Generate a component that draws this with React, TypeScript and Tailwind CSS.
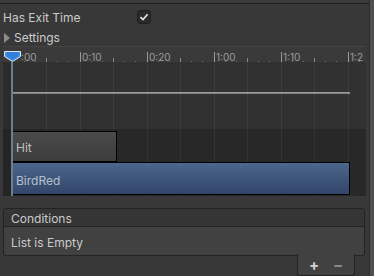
import React from 'react';

const FONT = { fontFamily: 'Inter, "Noto Sans", sans-serif' };

// timeline geometry, relative to the timeline's left edge (page x = 3)
const ORIGIN = 9.5;
const SECOND = 67;
const TIMELINE_W = 363;

const rulerLabels = [
    { k: 1, t: '0:10' },
    { k: 2, t: '0:20' },
    { k: 3, t: '1:00' },
    { k: 4, t: '1:10' },
    { k: 5, t: '1:2' },
];

const Ruler: React.FC = () => {
    const ticks = [];
    for (let i = 1; i <= 32; i++) {
        const x = Math.round(ORIGIN + (i * SECOND) / 6) + 0.5;
        if (x > TIMELINE_W - 4) break;
        const major = i % 6 === 0;
        const mid = i % 3 === 0;
        const h = major ? 11 : mid ? 5 : 2;
        ticks.push(
            <line key={i} x1={x} x2={x} y1={16 - h} y2={16} stroke={major ? '#9a9a9a' : mid ? '#8a8a8a' : '#6e6e6e'} strokeWidth={1} />
        );
    }
    return (
        <div className="relative h-[16px] w-full border-t border-[#444444] bg-[#3a3a3a]">
            <svg className="absolute inset-0" width={TIMELINE_W} height={16}>
                {ticks}
                {rulerLabels.map((l) => (
                    <text key={l.t} x={Math.round(ORIGIN + l.k * SECOND) + 2} y={14} fontSize={10} fill="#9c9c9c" style={FONT}>
                        {l.t}
                    </text>
                ))}
                <text x={18} y={14} fontSize={10} fill="#9c9c9c" style={FONT}>:00</text>
                {/* playhead marker */}
                <path d="M1.5 4.5 H17.5 V9.5 L9.5 14.5 L1.5 9.5 Z" fill="#3d8fe6" stroke="#dfe8f2" strokeWidth={1} />
                <path d="M4 5 H15 V9 L9.5 12.5 L4 9 Z" fill="#2f7fdc" />
            </svg>
        </div>
    );
};

const GridLines: React.FC = () => (
    <svg className="absolute inset-0 pointer-events-none" width={TIMELINE_W} height={134}>
        {Array.from({ length: 10 }, (_, i) => {
            const x = Math.round(ORIGIN + ((i + 1) * SECOND) / 2) + 0.5;
            return <line key={i} x1={x} x2={x} y1={0} y2={134} stroke="#ffffff" strokeOpacity={0.055} />;
        })}
    </svg>
);

const Timeline: React.FC = () => (
    <div className="w-[363px]">
        <Ruler />
        <div className="relative h-[134px] bg-[#2e2e2e]">
            <div className="flex h-[67px] bg-[#313131]">
                <div className="w-[8px] bg-[#2b2b2b]" />
                <div className="flex-1 pt-[30px] pl-[1px]">
                    <div className="h-[2px] w-[338px] bg-gradient-to-b from-[#a8a8a8] to-[#747474]" />
                </div>
            </div>
            <div className="flex h-[67px] bg-[#282828]">
                <div className="w-[8px] bg-[#242424]" />
                <div className="relative z-10 flex-1 pt-[2px] pl-[1px]">
                    <div className="flex h-[31px] w-[105px] items-center border border-black bg-gradient-to-b from-[#4b4b4b] to-[#3c3c3c] pl-[3px] pt-[2px] text-[12px] text-[#bdbdbd]">
                        Hit
                    </div>
                    <div className="flex h-[33px] w-[338px] items-center border border-black bg-gradient-to-b from-[#4b678b] to-[#32466a] pl-[3px] pt-[4px] text-[12px] text-[#b6c0cc]">
                        BirdRed
                    </div>
                </div>
            </div>
            <GridLines />
            {/* playhead */}
            <div className="absolute top-0 bottom-0 left-[8px] z-20 w-[2px] bg-[#6f7d8d]" />
        </div>
    </div>
);

export default function App() {
    return (
        <div className="flex h-[276px] w-[374px] overflow-hidden bg-[#383838] text-[#cbcbcb]" style={FONT}>
            <div className="flex w-[369px] flex-col">
                <div className="h-[3px] bg-[#3b3b3b]" />
                <div className="h-px bg-[#1f1f1f]" />
                <div className="mt-[4px] flex h-[20px] items-center pl-[3px] text-[12px]">
                    <span className="w-[134px] pt-[1px]">Has Exit Time</span>
                    <span className="flex h-[14px] w-[14px] items-center justify-center rounded-[3px] border border-[#1e1e1e] bg-[#2a2a2a]">
                        <svg width="10" height="10" viewBox="0 0 10 10">
                            <path d="M1.5 5.2 L4 7.6 L8.6 2.2" fill="none" stroke="#e6e6e6" strokeWidth="1.6" />
                        </svg>
                    </span>
                </div>
                <div className="flex h-[19px] items-center pl-[3px] pt-[2px] text-[12px]">
                    <svg width="10" height="10" viewBox="0 0 10 10" className="mr-[1px]">
                        <path d="M1 0 L7 5 L1 10 Z" fill="#8c8c8c" />
                    </svg>
                    <span>Settings</span>
                </div>
                <div className="pl-[3px]">
                    <Timeline />
                </div>
                <div className="mt-[12px] ml-[3px] w-[362px]">
                    <div className="rounded-[3px] border border-[#232323]">
                        <div className="flex h-[18px] items-center rounded-t-[3px] border-b border-[#232323] bg-[#353535] pl-[7px] pt-[3px] text-[12px]">
                            Conditions
                        </div>
                        <div className="flex h-[28px] items-center rounded-b-[3px] bg-[#414141] pl-[7px] pt-[4px] text-[12px]">
                            List is Empty
                        </div>
                    </div>
                    <div className="flex justify-end pr-[10px]">
                        <div className="relative -mt-[2px] flex h-[22px] w-[58px] items-center justify-around rounded-b-[3px] border-x border-b border-[#232323] bg-[#414141] px-[4px]">
                            <span className="text-[15px] font-bold leading-none text-[#d2d2d2]">+</span>
                            <span className="text-[15px] font-bold leading-none text-[#8e8e8e]">−</span>
                        </div>
                    </div>
                </div>
            </div>
            <div className="w-px bg-[#2e2e2e]" />
            <div className="w-[4px] bg-[#505050]" />
        </div>
    );
}
